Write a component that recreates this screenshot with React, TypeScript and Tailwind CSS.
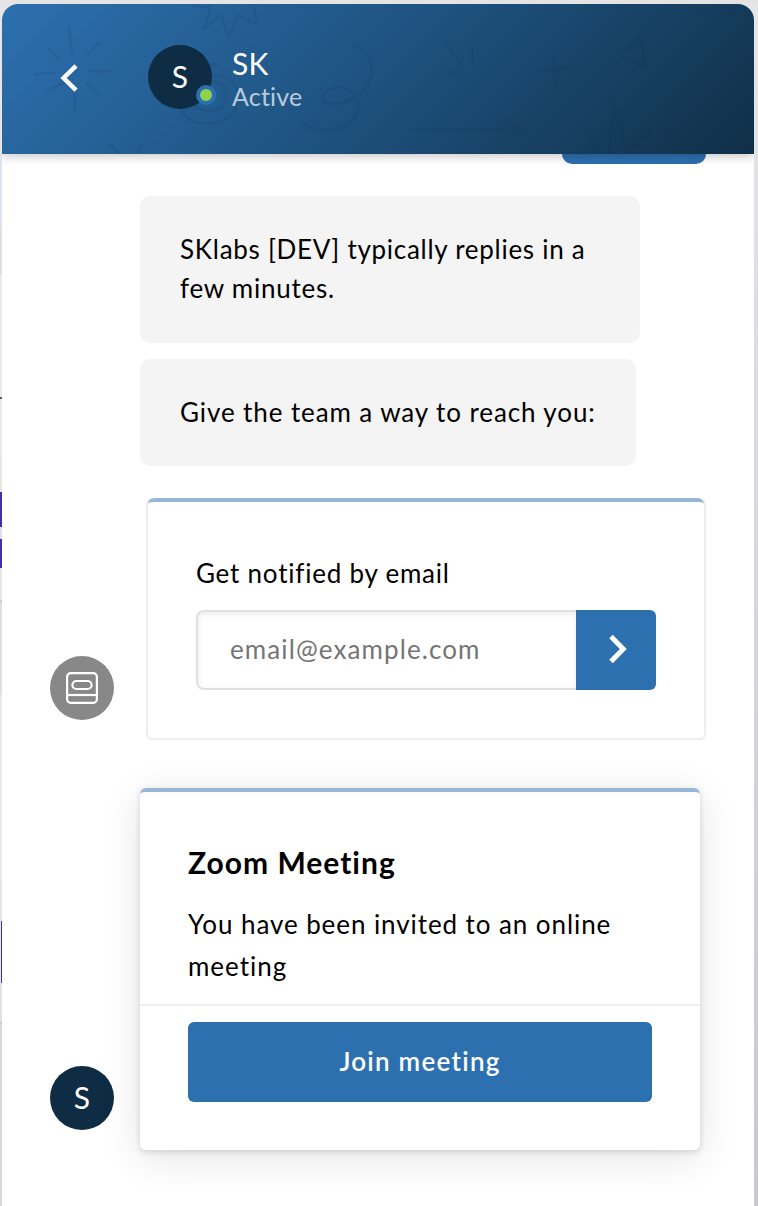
import React from "react";

function Doodles() {
  return (
    <svg
      className="absolute inset-0 h-[150px] w-[752px]"
      viewBox="2 4 752 150"
      fill="none"
      stroke="#0f2e45"
      strokeOpacity="0.11"
      strokeWidth="2.8"
      strokeLinecap="round"
      strokeLinejoin="round"
    >
      <path d="M69 28l3 26M99 43l-11 11M90 71h20M87 83l11 11M75 94v19M67 81l-20 10M35 74l20-1M47 48l12 11" />
      <path d="M194 5c6 3 12 2 17 1l-7 23 17-14 8 22 8-22 20 10-4-21" />
      <path d="M110 145l12 10M144 144l-8 10M203 65h15" />
      <path d="M182 111c6 12 22 14 34 12 17-4 25-19 22-31-4-15-20-19-32-14M194 105c10 9 25 8 31-3 4-10-2-20-13-21" />
      <path d="M352 45c16 2 24 21 17 37-8 17-31 26-43 20-11-7 6-17 19-14 15 5 18 22 7 33-12 12-43 12-51 0" />
      <path d="M447 45l15 20M472 46l1 16M443 68l13 7M554 53l1 35M539 70l31-2" />
      <path d="M641 38l5 31-25-14 20-17M414 130h104M502 120l21 9-20 12" />
      <path d="M591 136l5 18M609 154l5-50 12 48c15-14 30-27 48-40l-15 42M628 154c6-9 15-16 24-22" />
      <path d="M693 5c9 16 30 17 41 6M745 88l10 20-11 15M736 99l18 9" />
    </svg>
  );
}

function Avatar() {
  return (
    <div className="flex h-16 w-16 items-center justify-center rounded-full bg-[#0e2c43] pb-[3px] text-[30px] leading-none text-white">
      S
    </div>
  );
}

function BackdropEdge() {
  return (
    <div className="flex w-[2px] shrink-0 flex-col bg-[#e6e6e7]">
      <div className="h-[154px]" />
      <div className="h-[72px] bg-[#dce4f1]" />
      <div className="h-[48px] bg-[#e0e0e0]" />
      <div className="h-[123px] bg-[#ebebeb]" />
      <div className="h-[2px] bg-[#555c69]" />
      <div className="h-[59px] bg-[#ebebeb]" />
      <div className="h-[34px] bg-[#e6e6e6]" />
      <div className="h-[35px] bg-[#3b31ad]" />
      <div className="h-[12px] bg-[#e0e0ec]" />
      <div className="h-[29px] bg-[#3b31ad]" />
      <div className="h-[32px] bg-[#e6e6e6]" />
      <div className="h-[3px] bg-[#d0d0d0]" />
      <div className="h-[92px] bg-[#e0e0e0]" />
      <div className="h-[185px] bg-[#e9e9e9]" />
      <div className="h-[41px] bg-[#e4e4e4]" />
      <div className="ml-px h-[62px] bg-[#3b31ad]" />
      <div className="h-[39px] bg-[#e2e2e2]" />
      <div className="h-[2px] bg-[#cccccc]" />
      <div className="flex-1 bg-[#dadadd]" />
    </div>
  );
}

export default function App() {
  return (
    <div className="flex h-[1206px] w-[758px] overflow-hidden bg-linear-to-b from-[#e6e6e7] to-[#c9c9ce] font-['Lato',sans-serif] text-[26px] text-black">
      <BackdropEdge />
      <div className="flex w-[756px] flex-col">
        <div className="h-1 shrink-0 bg-[#e4e4e4]" />
        <div className="flex w-[752px] flex-1 flex-col overflow-hidden rounded-t-2xl bg-white">
          <header className="relative z-10 flex h-[150px] shrink-0 items-start bg-[linear-gradient(135deg,#2d70af_0%,#1f5584_45%,#102f47_100%)] shadow-[0_2px_10px_rgba(0,0,0,0.24)]">
            <Doodles />
            <svg className="relative mt-[60px] ml-[57px] h-[28px] w-[20px]" viewBox="0 0 20 28" fill="none" stroke="white" strokeWidth="4.5">
              <path d="M17 1.8L4.6 14l12.4 12.2" />
            </svg>
            <div className="relative mt-[41px] ml-[69px]">
              <Avatar />
              <span className="absolute top-10 left-12 h-5 w-5 rounded-full border-4 border-[#2d70af] bg-[#90d14b]" />
            </div>
            <div className="relative mt-[41px] ml-5 flex flex-col">
              <span className="text-[30px] leading-[36px] tracking-[0.3px] text-white">SK</span>
              <span className="text-[25px] leading-[30px] tracking-[0.2px] text-white/70">Active</span>
            </div>
          </header>

          <div className="mr-12 h-[10px] w-36 shrink-0 self-end rounded-b-[10px] bg-[#2d70af]" />

          <main className="flex flex-col">
            <div className="mt-8 ml-[138px] h-[147px] w-[500px] rounded-[10px] bg-[#f4f4f4] px-10 pt-[34px] leading-[39px]">
              <p className="tracking-[0.72px]">SKlabs [DEV] typically replies in a</p>
              <p className="tracking-[0.75px]">few minutes.</p>
            </div>
            <div className="mt-4 ml-[138px] flex h-[107px] w-[496px] items-center rounded-[10px] bg-[#f4f4f4] px-10 pb-px">
              <span className="whitespace-nowrap tracking-[0.9px]">Give the team a way to reach you:</span>
            </div>

            <div className="mt-8 ml-12 flex h-[242px] items-end">
              <div className="mb-5 flex h-16 w-16 items-center justify-center rounded-full bg-[#888888]">
                <svg className="h-8 w-8" viewBox="0 0 32 32" fill="none" stroke="white" strokeWidth="2.2">
                  <rect x="1.1" y="1.1" width="29.8" height="29.8" rx="3.6" />
                  <rect x="6.4" y="9" width="19.2" height="8" rx="4" />
                  <path d="M1 23h30" />
                </svg>
              </div>
              <section className="relative ml-8 h-[242px] w-[560px] rounded-md border-2 border-t-0 border-[#eeeeee] px-12 pt-[54px]">
                <div className="absolute inset-x-0 top-0 h-2 rounded-t-md border-t-4 border-[#96b7d7]" />
                <p className="leading-[42px] tracking-[0.78px]">Get notified by email</p>
                <div className="mt-4 flex h-20 w-[460px]">
                  <div className="flex w-[380px] items-center rounded-l-lg border-2 border-r-0 border-[#e0e0e0] pb-px pl-8 text-[#757575] shadow-[inset_0_2px_6px_rgba(0,0,0,0.08)]">
                    <span className="tracking-[1.1px]">email@example.com</span>
                  </div>
                  <button aria-label="Submit" className="flex w-20 items-center justify-center rounded-r-md bg-[#2d70af]">
                    <svg className="mb-0.5 ml-1 h-[30px] w-5" viewBox="0 0 20 30" fill="none" stroke="white" strokeWidth="5">
                      <path d="M3 2.5l12.3 12.5L3 27.5" />
                    </svg>
                  </button>
                </div>
              </section>
            </div>

            <div className="mt-12 ml-12 flex items-end">
              <div className="mb-5"><Avatar /></div>
              <section className="relative ml-[26px] h-[362px] w-[560px] rounded-md bg-white shadow-[0_8px_40px_rgba(0,0,0,0.11),0_2px_6px_rgba(0,0,0,0.14)]">
                <div className="absolute inset-x-0 top-0 h-2 rounded-t-md border-t-4 border-[#96b7d7]" />
                <div className="h-[218px] border-b-2 border-[#eeeeee] px-12 pt-[53px]">
                  <h2 className="text-[30px] leading-[42px] font-bold tracking-[1px]">Zoom Meeting</h2>
                  <div className="mt-5 leading-[42px]">
                    <p className="tracking-[0.92px]">You have been invited to an online</p>
                    <p className="tracking-[0.97px]">meeting</p>
                  </div>
                </div>
                <button className="mt-4 ml-12 flex h-20 w-[464px] items-center justify-center rounded-md bg-[#2d70af] pb-px font-semibold text-white">
                  <span className="tracking-[1.25px]">Join meeting</span>
                </button>
              </section>
            </div>
          </main>
        </div>
      </div>
    </div>
  );
}
